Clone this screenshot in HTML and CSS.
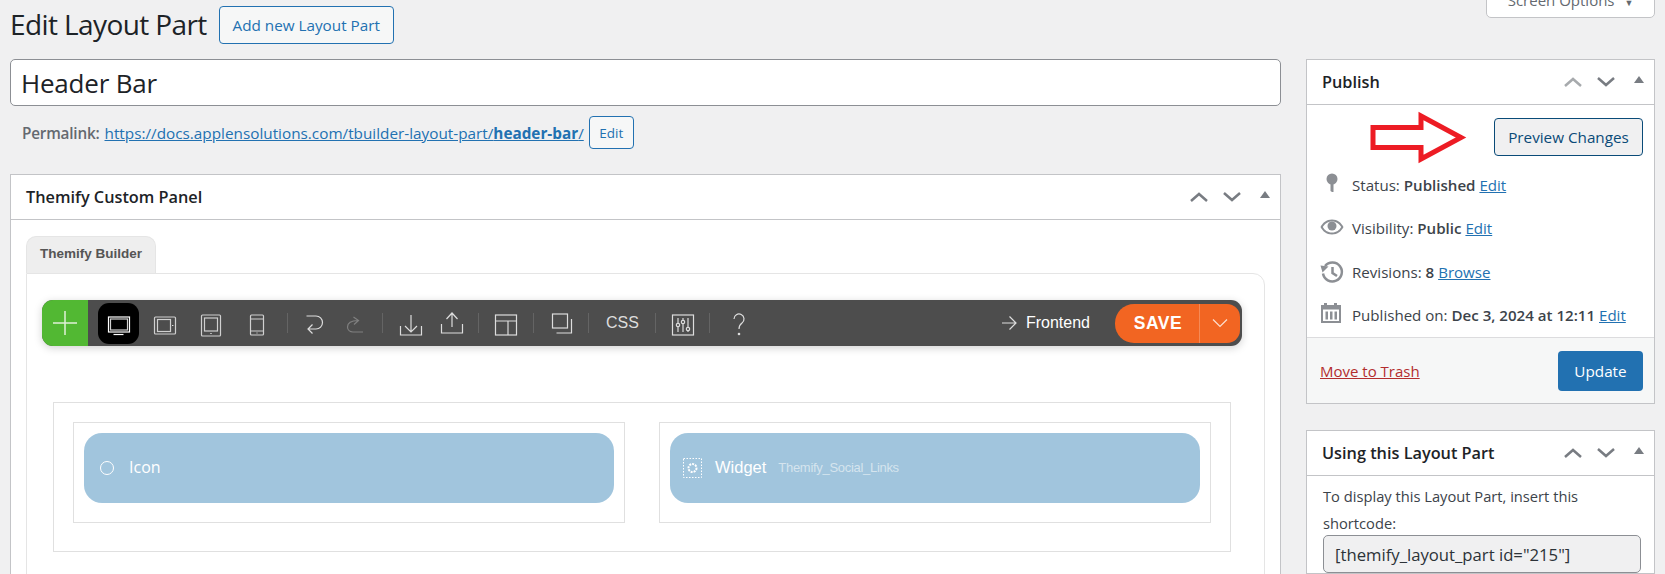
FILE: index.html
```
<!DOCTYPE html>
<html lang="en">
<head>
<meta charset="utf-8">
<title>Edit Layout Part</title>
<link rel="stylesheet" href="styles.css">
</head>
<body>
<div class="screen-options">Screen Options <span class="so-caret">▼</span></div>
<div class="page">
  <header class="heading">
    <h1>Edit Layout Part</h1>
    <a class="btn-outline add-new" href="#">Add new Layout Part</a>
  </header>
  <div class="columns">
    <main class="main">
      <div class="title-input">Header Bar</div>
      <div class="permalink">
        <span class="perma-label">Permalink:</span>
        <a class="perma-link" href="#">https://docs.applensolutions.com/tbuilder-layout-part/<b>header-bar</b>/</a>
        <a class="btn-outline perma-edit" href="#">Edit</a>
      </div>
      <section class="box custom-panel">
        <div class="box-head">
          <h2>Themify Custom Panel</h2>
          <div class="handles">
            <svg class="handle" viewBox="0 0 20 12"><path d="M2 10 10 3l8 7"/></svg>
            <svg class="handle" viewBox="0 0 20 12"><path d="M2 2l8 7 8-7"/></svg>
            <svg class="handle tri" viewBox="0 0 12 12"><path d="M6 2l5 7H1z"/></svg>
          </div>
        </div>
        <div class="panel-body">
          <div class="tab">Themify Builder</div>
          <div class="builder">
            <div class="toolbar">
              <div class="add-btn"><svg width="26" height="26" viewBox="0 0 26 26"><path d="M13 1v24M1 13h24"/></svg></div>
              <div class="tool-group devices">
                <div class="tool active"><svg viewBox="0 0 28 28"><rect x="3.500" y="8" width="21" height="15"/><rect class="dim" x="5.500" y="10" width="17" height="11"/><path d="M8.500 25.500h10"/></svg></div>
                <div class="tool"><svg viewBox="0 0 28 28"><rect class="dim" x="3.500" y="8" width="21" height="17" rx="1"/><rect class="dim" x="6.500" y="10.500" width="13" height="12"/><path d="M21 16.500h1.400"/></svg></div>
                <div class="tool"><svg viewBox="0 0 28 28"><rect class="dim" x="4.500" y="6" width="19" height="21" rx="1"/><rect class="dim" x="7.500" y="9" width="13" height="13"/><path d="M13.300 24.500h1.400"/></svg></div>
                <div class="tool"><svg viewBox="0 0 28 28"><rect class="dim" x="7.500" y="6" width="13" height="20" rx="1"/><path class="dim" d="M7.500 10h13M7.500 22h13"/><path d="M13.500 24h1"/></svg></div>
              </div>
              <div class="sep"></div>
              <div class="tool-group">
                <div class="tool"><svg viewBox="0 0 28 28"><path d="M6.500 7H16a6.500 6.500 0 0 1 0 13H8M12.500 15.500 8 20l4.500 4.500"/></svg></div>
                <div class="tool faded"><svg viewBox="0 0 28 28"><path d="M17 11.500C10 11.500 6.500 14 6.500 18c0 3 2.500 5 5.500 5h10M12.500 8l5 3.500-4.500 4"/></svg></div>
              </div>
              <div class="sep"></div>
              <div class="tool-group shift">
                <div class="tool"><svg viewBox="0 0 28 28"><path d="M4.500 17v9h21v-9M15 6v17M9 17l6 6 6-6"/></svg></div>
                <div class="tool"><svg viewBox="0 0 28 28"><path d="M4.500 15v9h21v-9M15 18V4M9.500 10 15 4l5.500 6"/></svg></div>
              </div>
              <div class="sep"></div>
              <div class="tool-group shift">
                <div class="tool"><svg viewBox="0 0 28 28"><rect x="3.500" y="6" width="21" height="20"/><path d="M3.500 12h21M16 12v14"/></svg></div>
              </div>
              <div class="sep"></div>
              <div class="tool shift"><svg viewBox="0 0 28 28"><rect x="5.500" y="5" width="15" height="14"/><path d="M24.500 10v14h-15"/></svg></div>
              <div class="sep"></div>
              <div class="tool-css">CSS</div>
              <div class="sep"></div>
              <div class="tool"><svg viewBox="0 0 28 28"><rect x="4.500" y="6" width="21" height="20"/><path d="M10 9v14M15 9v14M20 9v14"/><circle class="knob" cx="10" cy="16" r="1.700"/><circle class="knob" cx="15" cy="13" r="1.700"/><circle class="knob" cx="20" cy="20" r="1.700"/></svg></div>
              <div class="sep"></div>
              <div class="tool shift-help"><svg viewBox="0 0 28 28"><path d="M9 10a5 5 0 1 1 8 4c-2 1.500-3 3-3 6"/><circle class="dot" cx="14" cy="25" r="1.300"/></svg></div>
              <div class="frontend">
                <svg width="16" height="16" viewBox="0 0 16 16"><path d="M1 8h14M8.500 1.500 15 8l-6.500 6.500"/></svg>
                <span>Frontend</span>
              </div>
              <div class="save">
                <span class="save-label">SAVE</span>
                <span class="save-more"><svg width="16" height="10" viewBox="0 0 16 10"><path d="M1 1.500l7 7 7-7"/></svg></span>
              </div>
            </div>
            <div class="row">
              <div class="col">
                <div class="module">
                  <svg class="mod-icon" width="16" height="16" viewBox="0 0 16 16"><circle cx="8" cy="8" r="6.500"/></svg>
                  <span class="mod-name icon-name">Icon</span>
                </div>
              </div>
              <div class="col">
                <div class="module widget">
                  <svg class="mod-icon" width="20" height="20" viewBox="0 0 20 20"><rect class="dash" x="0.500" y="0.500" width="18" height="19"/><circle class="gear" cx="9.500" cy="10" r="4"/></svg>
                  <span class="mod-name">Widget</span>
                  <span class="mod-sub">Themify_Social_Links</span>
                </div>
              </div>
            </div>
          </div>
        </div>
      </section>
    </main>
    <aside class="side">
      <section class="box publish">
        <div class="box-head side-head">
          <h2>Publish</h2>
          <div class="handles">
            <svg class="handle light" viewBox="0 0 20 12"><path d="M2 10 10 3l8 7"/></svg>
            <svg class="handle" viewBox="0 0 20 12"><path d="M2 2l8 7 8-7"/></svg>
            <svg class="handle tri" viewBox="0 0 12 12"><path d="M6 2l5 7H1z"/></svg>
          </div>
        </div>
        <div class="preview-row">
          <svg class="red-arrow" width="96" height="54" viewBox="0 0 96 54"><path d="M1 17.500h48V6l40 21.500-40 21.500V37.500H1z"/></svg>
          <a class="btn-preview" href="#">Preview Changes</a>
        </div>
        <div class="meta">
          <div class="meta-row">
            <svg class="meta-icon" viewBox="0 0 24 24"><circle cx="12" cy="6" r="5.500"/><path d="M10.500 9h3v10h-1.500l-1.500-1z"/></svg>
            <span>Status: <b>Published</b> <a href="#">Edit</a></span>
          </div>
          <div class="meta-row">
            <svg class="meta-icon" viewBox="0 0 24 24"><g transform="translate(0 -1)"><path fill-rule="evenodd" d="M12 4.500C6.500 4.500 2.500 8 .5 12c2 4 6 7.500 11.500 7.500s9.500-3.500 11.500-7.500c-2-4-6-7.500-11.500-7.500zM12 6.500C7.500 6.500 4.500 9 2.800 12c1.700 3 4.700 5.500 9.200 5.500s7.500-2.500 9.200-5.500C19.500 9 16.500 6.500 12 6.500z"/><circle cx="12" cy="11" r="4.500"/></g></svg>
            <span>Visibility: <b>Public</b> <a href="#">Edit</a></span>
          </div>
          <div class="meta-row">
            <svg class="meta-icon hist" viewBox="0 0 24 24"><path d="M5 6a9.500 9.500 0 1 1-2 7.500"/><path d="M12.500 7v6l4.500 3"/><path class="fill" d="M.5 5.500l8 1-6 6z"/></svg>
            <span>Revisions: <b>8</b> <a href="#">Browse</a></span>
          </div>
          <div class="meta-row">
            <svg class="meta-icon" viewBox="0 0 24 24"><path fill-rule="evenodd" d="M1 2h3V0h3v2h7V0h3v2h4v18H1zm2 4.500V18h16V6.500zM5.500 8.500H8v8H5.500zm4.500 0h2.500v8H10zm4.500 0H17v8h-2.500z"/></svg>
            <span>Published on: <b>Dec 3, 2024 at 12:11</b> <a href="#">Edit</a></span>
          </div>
        </div>
        <div class="publish-foot">
          <a class="trash" href="#">Move to Trash</a>
          <a class="btn-primary" href="#">Update</a>
        </div>
      </section>
      <section class="box using">
        <div class="box-head side-head">
          <h2>Using this Layout Part</h2>
          <div class="handles">
            <svg class="handle" viewBox="0 0 20 12"><path d="M2 10 10 3l8 7"/></svg>
            <svg class="handle" viewBox="0 0 20 12"><path d="M2 2l8 7 8-7"/></svg>
            <svg class="handle tri" viewBox="0 0 12 12"><path d="M6 2l5 7H1z"/></svg>
          </div>
        </div>
        <div class="using-body">
          <p>To display this Layout Part, insert this shortcode:</p>
          <div class="shortcode">[themify_layout_part id="215"]</div>
        </div>
      </section>
    </aside>
  </div>
</div>
</body>
</html>
```
FILE: styles.css
```
* { box-sizing: border-box; }
html, body { margin: 0; padding: 0; }
body {
  position: relative;
  height: 574px;
  overflow: hidden;
  background: #f0f0f1;
  color: #3c434a;
  font-family: "Open Sans", "Noto Sans", sans-serif;
  font-size: 15.500px;
}
a { color: #2271b1; }
.page { padding: 0 10px; }
.screen-options {
  position: absolute;
  top: -20px;
  right: 10px;
  width: 169px;
  height: 38px;
  padding-top: 9px;
  text-align: center;
  background: #fff;
  border: 1px solid #c3c4c7;
  border-radius: 0 0 5px 5px;
  color: #646970;
  font-size: 15px;
}
.so-caret { font-size: 9px; margin-left: 6px; }

.heading { display: flex; align-items: center; height: 59px; padding-bottom: 9px; }
h1 { margin: -2px 0 0; font-size: 28px; font-weight: 400; color: #1d2327; letter-spacing: -0.600px; }
.btn-outline {
  display: inline-flex;
  align-items: center;
  justify-content: center;
  border: 1px solid #2271b1;
  border-radius: 4px;
  background: #f6f7f7;
  text-decoration: none;
  color: #2271b1;
}
.add-new { width: 175px; height: 38px; margin-left: 12px; font-size: 15.250px; }

.columns { display: flex; gap: 25px; align-items: flex-start; }
.main { width: 1271px; flex: none; }
.side { width: 349px; flex: none; }

.title-input {
  height: 47px;
  padding: 0 10px;
  display: flex;
  align-items: center;
  background: #fff;
  border: 1px solid #8c8f94;
  border-radius: 5px;
  font-size: 26px;
  color: #1d2327;
  letter-spacing: -0.200px;
}
.permalink { display: flex; align-items: center; height: 33px; margin-top: 10px; padding-left: 12px; font-size: 15.300px; }
.perma-label { font-weight: 600; color: #646970; letter-spacing: -0.200px; }
.perma-link { margin-left: 5px; }
.perma-edit { width: 45px; height: 33px; margin-left: 5px; font-size: 13.500px; }

.box { background: #fff; border: 1px solid #c3c4c7; }
.custom-panel { margin-top: 25px; }
.box-head { display: flex; align-items: center; justify-content: space-between; height: 45px; border-bottom: 1px solid #c3c4c7; padding-left: 15px; padding-right: 7px; }
.side-head { padding-left: 15px; }
h2 { margin: 0; font-size: 16.300px; font-weight: 600; color: #1d2327; }
.handles { display: flex; align-items: center; gap: 13px; padding-right: 2px; }
.handle { width: 20px; height: 12px; fill: none; stroke: #787c82; stroke-width: 2.500; }
.handle.light { stroke: #a7aaad; }
.handle.tri { width: 12px; margin: -4px 0 0 4px; fill: #787c82; stroke: none; }

.panel-body { padding: 16px 15px 0; }
.tab {
  width: 130px;
  height: 37px;
  padding-bottom: 3px;
  display: flex;
  align-items: center;
  justify-content: center;
  background: #eee;
  border: 1px solid #e5e5e5;
  border-bottom: 0;
  border-radius: 10px 10px 0 0;
  font-family: "Liberation Sans", Arial, sans-serif;
  font-size: 13.500px;
  font-weight: 700;
  color: #555;
}
.builder {
  height: 320px;
  padding: 26px 22px 0 15px;
  border: 1px solid #e5e5e5;
  border-radius: 0 12px 0 0;
}
.toolbar {
  display: flex;
  align-items: center;
  height: 46px;
  background: #4d4d4d;
  border-radius: 11px;
  box-shadow: 0 2px 8px rgba(0, 0, 0, .18);
  font-family: "Liberation Sans", Arial, sans-serif;
}
.toolbar svg { fill: none; stroke: #ddd; stroke-width: 1.200; }
.add-btn { width: 46px; height: 46px; flex: none; display: flex; align-items: center; justify-content: center; background: #52b833; border-radius: 11px 0 0 11px; }
.toolbar .add-btn svg { stroke: #dff0d8; stroke-width: 1.500; }
.tool-group { display: flex; }
.devices { gap: 5px; margin-left: 10px; margin-right: 3px; }
.shift { margin-left: 1px; }
.shift-help { margin-left: 3px; }
.tool { width: 41px; height: 41px; flex: none; display: flex; align-items: center; justify-content: center; border-radius: 11px; }
.tool svg { width: 28px; height: 28px; }
.tool.active { background: #000; }
.toolbar .tool.active svg { stroke: #fff; }
.toolbar svg .dim { stroke: #d0d0d0; }
.toolbar .tool.faded svg { stroke: #808080; }
.toolbar svg .knob { fill: #4d4d4d; }
.toolbar svg .dot { fill: #ddd; stroke: none; }
.sep { width: 1px; height: 20px; flex: none; margin: 0 5px 0 7px; background: #646464; }
.tool-css { width: 54px; flex: none; padding-left: 3px; text-align: center; font-size: 16px; color: #ddd; }
.frontend { display: flex; align-items: center; gap: 9px; margin-left: auto; margin-right: 25px; color: #fff; font-size: 16px; }
.save { display: flex; align-items: stretch; width: 125px; height: 39px; margin-right: 2px; background: #f26522; border-radius: 19px 13px 13px 19px; color: #fff; }
.save-label { width: 85px; display: flex; align-items: center; justify-content: center; padding-left: 2px; font-size: 17.500px; font-weight: 700; letter-spacing: .5px; border-right: 1px solid #f58a56; }
.save-more { flex: 1; display: flex; align-items: center; justify-content: center; }
.toolbar .save-more svg { stroke: #fde0d0; }

.row { display: flex; justify-content: space-between; height: 150px; margin: 56px 11px 0; padding: 19px 19px 0; border: 1px solid #e0e0e0; }
.col { width: 552px; height: 101px; padding: 10px; border: 1px solid #e0e0e0; }
.module { display: flex; align-items: center; height: 70px; padding-left: 15px; background: #a1c5dd; border-radius: 18px; color: #fff; }
.mod-icon { fill: none; stroke: #fff; flex: none; }
.mod-name { margin-left: 12px; margin-top: -2px; font-size: 16px; }
.icon-name { margin-left: 14px; font-family: "Open Sans", sans-serif; }
.widget { padding-left: 13px; font-family: "Liberation Sans", Arial, sans-serif; }
.widget .mod-name { font-size: 16.500px; }
.mod-sub { margin-left: 12px; margin-top: -2px; font-size: 13px; color: #d5e4ee; letter-spacing: -.3px; }
.dash { stroke-dasharray: 1.500 1.500; stroke-width: 1; }
.gear { stroke-width: 2; stroke-dasharray: 2 1; }

.preview-row { display: flex; align-items: center; justify-content: flex-end; gap: 26px; height: 38px; margin: 13px 11px 0 0; }
.red-arrow { flex: none; overflow: visible; fill: none; stroke: #ed1c24; stroke-width: 5; }
.btn-preview { display: flex; align-items: center; justify-content: center; width: 149px; height: 38px; border: 1px solid #0a4b78; border-radius: 4px; background: #f0f0f1; color: #0a4b78; text-decoration: none; font-size: 15.250px; }
.meta { padding: 7px 0 0 13px; }
.meta-row { display: flex; align-items: center; gap: 8px; height: 43.500px; font-size: 15.100px; }
.meta-row b { font-weight: 600; }
.meta-icon { width: 24px; height: 24px; flex: none; overflow: visible; fill: #8c8f94; }
.hist { fill: none; stroke: #8c8f94; stroke-width: 2.500; }
.hist .fill { fill: #8c8f94; stroke: none; }
.publish-foot { display: flex; align-items: center; justify-content: space-between; height: 66px; padding: 0 11px 0 13px; background: #f6f7f7; border-top: 1px solid #dcdcde; }
.trash { color: #b32d2e; font-size: 15px; }
.btn-primary { display: flex; align-items: center; justify-content: center; width: 85px; height: 40px; background: #2271b1; border-radius: 4px; color: #fff; text-decoration: none; font-size: 15.250px; }
.using { margin-top: 26px; }
.using-body { padding: 7px 16px 0; font-size: 14.700px; }
.using-body p { margin: 0; line-height: 26.500px; }
.shortcode { display: flex; align-items: center; width: 318px; height: 38px; margin-top: -1px; padding-left: 11px; background: #f0f0f1; border: 1px solid #8c8f94; border-radius: 5px; font-size: 16.700px; color: #2c3338; }
```
